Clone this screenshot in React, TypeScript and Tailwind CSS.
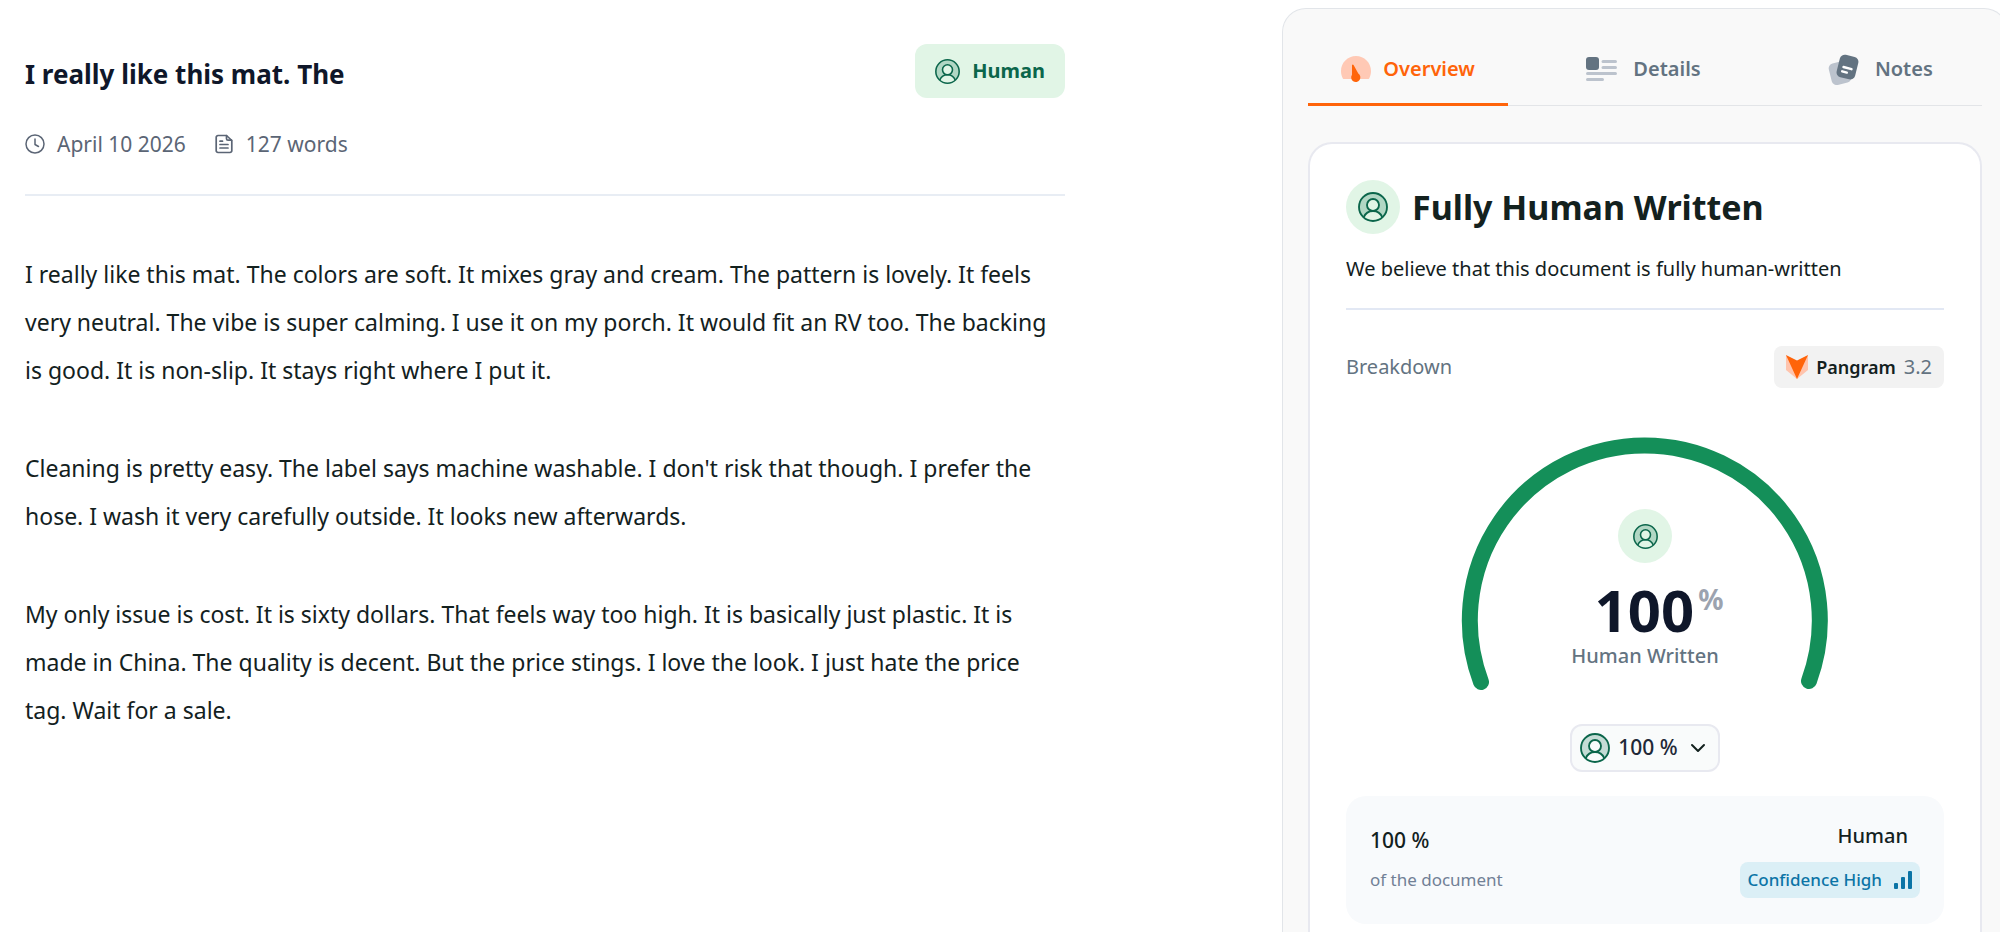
import React from "react";
import { ChevronDown } from "lucide-react";

const paragraphs = [
  "I really like this mat. The colors are soft. It mixes gray and cream. The pattern is lovely. It feels very neutral. The vibe is super calming. I use it on my porch. It would fit an RV too. The backing is good. It is non-slip. It stays right where I put it.",
  "Cleaning is pretty easy. The label says machine washable. I don't risk that though. I prefer the hose. I wash it very carefully outside. It looks new afterwards.",
  "My only issue is cost. It is sixty dollars. That feels way too high. It is basically just plastic. It is made in China. The quality is decent. But the price stings. I love the look. I just hate the price tag. Wait for a sale.",
];

const HumanIcon = ({ className }: { className?: string }) => (
  <svg viewBox="0 0 24 24" fill="none" className={className} aria-hidden="true">
    <path
      d="M12 1a11 11 0 0 0-7.2 19.3C6 17 8.500 15.200 12 15.200S18 17 19.200 20.300A11 11 0 0 0 12 1ZM12 15.200a4.800 4.800 0 1 1 0-9.600 4.800 4.800 0 0 1 0 9.600Z"
      fill="#0b6e4f"
      fillOpacity="0.22"
      fillRule="evenodd"
    />
    <g stroke="#0b664b" strokeWidth="1.500">
      <circle cx="12" cy="12" r="11.200" />
      <circle cx="12" cy="10.400" r="4.800" />
      <path d="M4.600 20.200C5.900 17 8.600 15.200 12 15.200s6.100 1.800 7.400 5" />
    </g>
  </svg>
);

const ClockIcon = () => (
  <svg viewBox="0 0 20 20" fill="none" stroke="currentColor" strokeWidth="1.500" strokeLinecap="round" strokeLinejoin="round" className="size-5" aria-hidden="true">
    <circle cx="10" cy="10" r="9" />
    <path d="M10 5v5.500l3.500 2" />
  </svg>
);

const DocumentIcon = () => (
  <svg viewBox="0 0 20 20" fill="none" stroke="currentColor" strokeWidth="1.700" strokeLinecap="round" strokeLinejoin="round" className="size-5" aria-hidden="true">
    <path d="M12.500 1.500H4A1.800 1.800 0 0 0 2.200 3.300v13.400A1.800 1.800 0 0 0 4 18.500h12a1.800 1.800 0 0 0 1.800-1.800V6.500Z" />
    <path d="M12.500 1.500v3.200a1.500 1.500 0 0 0 1.500 1.500h3.500M6 7.200h2.500M6 10.500h8M6 14h8" />
  </svg>
);

const GaugeIcon = () => (
  <svg viewBox="0 0 30 30" className="size-[30px]" aria-hidden="true">
    <path d="M15 2C6.700 2 0 8.700 0 17c0 2.600.6 5 1.700 7.200.5.900 1.200.8 2 .8h22.600c.8 0 1.500.1 2-.8C29.400 22 30 19.600 30 17 30 8.700 23.300 2 15 2Z" fill="#ffc9b5" />
    <path d="M11 11.200c.3-.9 1.300-.8 1.700 0l4.600 8.400a4.600 4.600 0 1 1-6.300 1.200Z" fill="#ff640a" />
  </svg>
);

const DetailsIcon = () => (
  <svg viewBox="0 0 31 30" className="h-[30px] w-[31px]" aria-hidden="true">
    <rect y="3" width="13" height="13" rx="3" fill="#637381" />
    <g stroke="#bcc3cd" strokeWidth="3" strokeLinecap="round">
      <path d="M17 7.500h12.500M17 13.500h12.500M1.500 19.500h28M1.500 25.500h15" />
    </g>
  </svg>
);

const NotesIcon = () => (
  <svg viewBox="0 0 31 31" className="size-[31px]" aria-hidden="true">
    <rect x="2" y="8" width="20" height="22" rx="5" transform="rotate(-14 12 19)" fill="#bcc3cd" />
    <rect x="10" y="1.500" width="19" height="23" rx="5" transform="rotate(14 19 13)" fill="#637381" />
    <path d="m15.500 13 8 2.200M14.200 17.300l4.600 1.300" stroke="#fff" strokeWidth="2.400" strokeLinecap="round" />
  </svg>
);

const PangramLogo = () => (
  <svg viewBox="0 0 22 24" className="h-6 w-[22px]" aria-hidden="true">
    <path d="M0 0v15l11 9 11-9V0L11 12Z" fill="#ffc4ad" />
    <path d="m0 0 11 5.500L22 0 11 24Z" fill="#ff640a" />
  </svg>
);

const BarsIcon = () => (
  <svg viewBox="0 0 18 18" fill="#0b74a6" className="size-[18px]" aria-hidden="true">
    <rect x="0" y="12" width="4" height="6" rx="1" />
    <rect x="7" y="6" width="4" height="12" rx="1" />
    <rect x="14" y="0" width="4" height="18" rx="1" />
  </svg>
);

const tabs = [
  { name: "Overview", icon: <GaugeIcon />, active: true },
  { name: "Details", icon: <DetailsIcon />, active: false },
  { name: "Notes", icon: <NotesIcon />, active: false },
];

const Document = () => {
  return (
    <main className="pl-[25px] pr-[217px] pt-11">
      <header className="border-b-2 border-[#e8edf4] pb-9">
        <div className="flex items-end justify-between">
          <h1 className="text-[26px] leading-[48px] font-bold text-[#0f172a]">
            I really like this mat. The
          </h1>
          <span className="flex h-[54px] items-center gap-3 rounded-xl bg-[#e1f5e6] px-5 text-xl font-bold text-[#0b664b]">
            <HumanIcon className="size-[25px]" />
            Human
          </span>
        </div>
        <div className="mt-8 flex items-center gap-7 text-[21px] leading-7 text-[#5b6575]">
          <span className="flex items-center gap-3">
            <ClockIcon />
            April 10 2026
          </span>
          <span className="flex items-center gap-3">
            <DocumentIcon />
            127 words
          </span>
        </div>
      </header>

      <article className="mt-[54px] flex flex-col gap-[50px] pr-2 text-[23px] leading-[48px] text-[#13211e]">
        {paragraphs.map((text) => (
          <p key={text}>{text}</p>
        ))}
      </article>
    </main>
  );
};

const Gauge = () => {
  return (
    <div className="relative mx-auto mt-[50px] w-[366px]">
      <svg viewBox="0 0 366 254" fill="none" className="w-full overflow-visible" aria-hidden="true">
        <path d="M19 244A175 175 0 1 1 347 243" stroke="#148f59" strokeWidth="16" strokeLinecap="round" />
      </svg>
      <div className="absolute inset-x-0 top-[71px] flex flex-col items-center">
        <span className="flex size-[54px] items-center justify-center rounded-full bg-[#e1f5e6]">
          <HumanIcon className="size-[25px]" />
        </span>
        <p className="mt-4 flex items-start pl-7 font-bold text-[#0f172a]">
          <span className="text-[58px] leading-[62px]">100</span>
          <span className="pl-1 text-[28px] leading-10 text-[#9ca3af]">%</span>
        </p>
        <p className="text-xl leading-[30px] font-medium text-[#637381]">Human Written</p>
      </div>
    </div>
  );
};

const Overview = () => {
  return (
    <section className="mt-9 rounded-t-3xl border-2 border-b-0 border-[#e8e9f0] bg-white px-9 pt-9 pb-3">
      <div className="flex items-center gap-3">
        <span className="flex size-[54px] items-center justify-center rounded-full bg-[#e1f5e6]">
          <HumanIcon className="size-[30px]" />
        </span>
        <h2 className="text-[34px] leading-[48px] font-bold text-[#13211e]">
          Fully Human Written
        </h2>
      </div>
      <p className="mt-5 border-b-2 border-[#e2e8f4] pb-6 text-xl leading-[30px] text-[#13211e]">
        We believe that this document is fully human-written
      </p>

      <div className="mt-9 flex items-center justify-between">
        <h3 className="text-xl text-[#637381]">Breakdown</h3>
        <span className="flex h-[42px] items-center rounded-lg bg-[#f2f2f2] px-3 text-xl text-[#637381]">
          <PangramLogo />
          <b className="px-2 text-lg font-semibold text-[#13211e]">Pangram</b>
          3.2
        </span>
      </div>

      <Gauge />

      <div className="mt-8 flex justify-center">
        <button
          type="button"
          className="flex h-12 items-center gap-2 rounded-xl border-2 border-[#e8e9f0] bg-[#f9fbfb] px-2 text-[21px] font-medium text-[#1f2937]"
        >
          <HumanIcon className="size-[30px]" />
          100 %
          <ChevronDown className="size-6 text-[#13211e]" strokeWidth={2} />
        </button>
      </div>

      <div className="mt-6 flex items-center justify-between rounded-[20px] bg-[#f8fafc] px-6 py-6">
        <div>
          <p className="text-[21px] leading-10 font-medium text-[#13211e]">100 %</p>
          <p className="text-[17px] leading-10 text-[#718096]">of the document</p>
        </div>
        <div className="flex flex-col items-end">
          <p className="pr-3 text-xl leading-7 font-medium text-[#13211e]">Human</p>
          <span className="mt-3 flex h-9 items-center gap-3 rounded-lg bg-[#dbeff6] px-2 text-[17px] font-medium text-[#0b74a6]">
            Confidence High
            <BarsIcon />
          </span>
        </div>
      </div>
    </section>
  );
};

const App = () => {
  return (
    <div className="h-screen overflow-hidden bg-white font-['Noto_Sans',sans-serif]">
      <div className="-mr-2 grid grid-cols-[minmax(0,1282fr)_minmax(0,726fr)]">
        <Document />
        <aside className="mt-2 rounded-t-3xl border border-b-0 border-[#e2e5e9] bg-[#f9f9f9] px-[25px] pt-[26px]">
          <nav className="grid grid-cols-[200fr_270fr_203fr] border-b border-[#e3e5e8]">
            {tabs.map(({ name, icon, active }) => (
              <button
                key={name}
                type="button"
                className={
                  active
                    ? "-mb-px flex h-[71px] items-center justify-center gap-3 border-b-3 border-[#ff640a] text-xl font-semibold text-[#ff640a]"
                    : "-mb-px flex h-[71px] items-center justify-center gap-4 border-b-3 border-transparent text-xl font-semibold text-[#637381]"
                }
              >
                {icon}
                {name}
              </button>
            ))}
          </nav>
          <Overview />
        </aside>
      </div>
    </div>
  );
};

export default App;
